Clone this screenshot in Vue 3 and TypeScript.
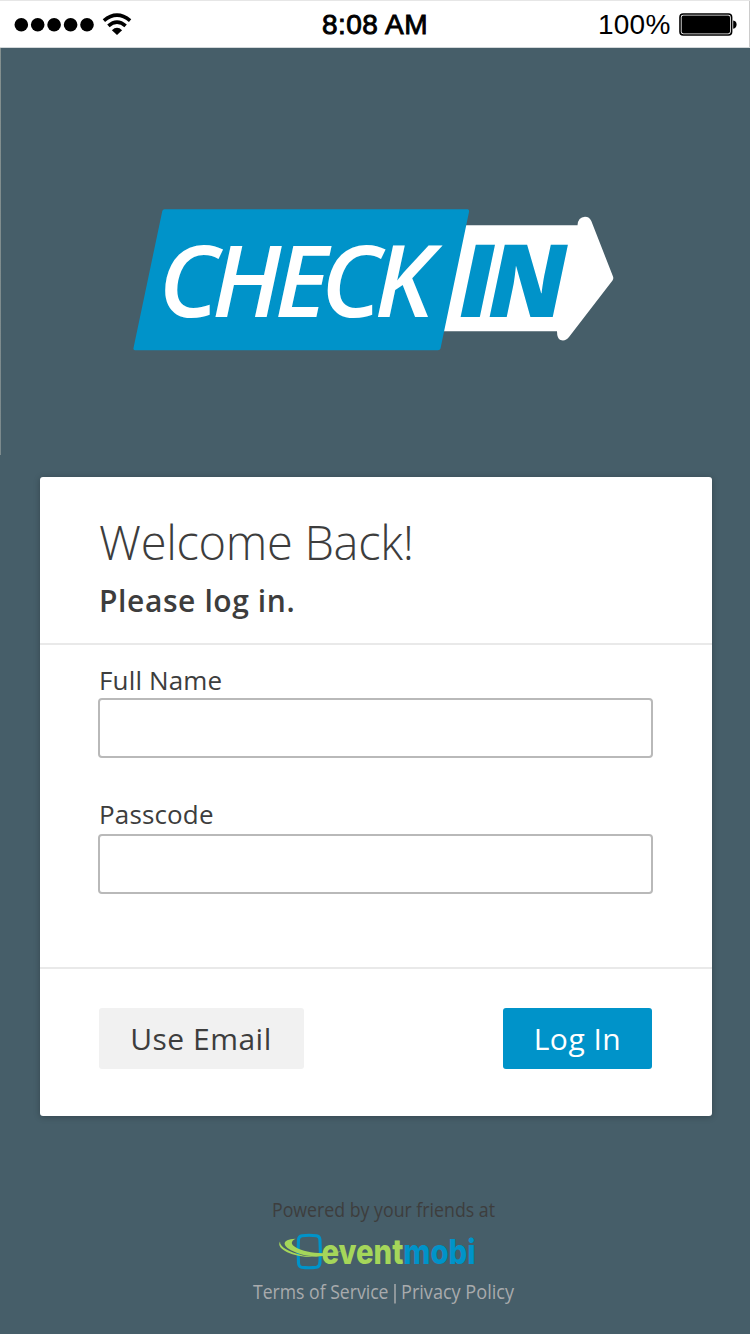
<script setup lang="ts">
import { ref } from 'vue'

const fullName = ref<string>('')
const passcode = ref<string>('')
const signalDots: number[] = [21.3, 37.7, 54.1, 70.6, 87]
</script>

<template>
  <main class="screen">
    <header class="status">
      <svg class="signal" width="140" height="46" viewBox="0 1 140 46">
        <circle v-for="x in signalDots" :key="x" :cx="x" cy="24.8" r="6.8" />
        <g fill="none" stroke="#000" stroke-width="3.6">
          <path d="M103.9 20.6Q117 9.600 130.1 20.6" />
          <path d="M108.4 25.9Q117 18.4 125.6 25.9" />
        </g>
        <path d="M111.900 30.300Q117 25.4 122.100 30.300L117 35Z" />
      </svg>
      <span class="time">8:08 AM</span>
      <div class="power">
        <span class="percent">100%</span>
        <svg width="60" height="24" viewBox="0 0 60 24">
          <rect x="1" y="1" width="51.6" height="21" rx="3.2" fill="#fff" stroke="#000" stroke-width="1.6" />
          <rect x="2.600" y="2.600" width="48.400" height="17.800" rx="1.8" />
          <path d="M54.2 7.4Q57.6 8 57.6 11.6T54.2 15.8Z" />
        </svg>
      </div>
    </header>

    <div class="brand">
      <svg width="482" height="143" viewBox="133 208 482 143">
        <path d="M450 225.300H577.5Q578 217 585 216.700Q589.5 216.700 591.3 221L613 276.500Q613.8 278.500 612.500 280.500L569 337Q565.500 341.500 560.500 340Q557 338.500 557 331.200H440Z" fill="#fff" />
        <path d="M164.500 209.200H467.500Q469.500 209.500 469 212L440.500 348.500Q440 350.300 438 350.300H135Q133 350.300 133.500 348L162.300 211Q162.800 209.200 164.500 209.200Z" fill="#0093c9" />
        <text class="check" x="158.500" y="317" textLength="275" lengthAdjust="spacing">CHECK</text>
        <text class="in" x="459" y="317" textLength="108.500" lengthAdjust="spacing">IN</text>
      </svg>
    </div>

    <form class="card" @submit.prevent>
      <div class="intro">
        <h1>Welcome Back!</h1>
        <p>Please log in.</p>
      </div>
      <div class="fields">
        <label for="name">Full Name</label>
        <input id="name" v-model="fullName" type="text">
        <label for="code" class="second">Passcode</label>
        <input id="code" v-model="passcode" type="password">
      </div>
      <div class="actions">
        <button type="button" class="alt">Use Email</button>
        <button type="submit" class="login">Log In</button>
      </div>
    </form>

    <footer class="foot">
      <svg width="400" height="130" viewBox="178 1186 400 130">
        <text class="powered" x="272" y="1217" textLength="223" lengthAdjust="spacingAndGlyphs">Powered by your friends at</text>
        <path d="M302 1235.800Q309 1234.800 316.500 1235.800Q319.500 1236.300 319.900 1239.500Q320.800 1251 319.900 1263Q319.500 1266.700 316.500 1267.200Q309 1268.200 301.500 1267.200Q298.700 1266.700 298.500 1263Q297.700 1251 298.500 1239.500Q298.700 1236.300 302 1235.800Z" fill="none" stroke="#0093c9" stroke-width="3.100" />
        <text class="mark" x="321.500" y="1263.700" textLength="154" lengthAdjust="spacingAndGlyphs"><tspan class="event">event</tspan><tspan class="mobi">mobi</tspan></text>
        <path d="M295.500 1238.800C290.500 1241.500 290.500 1244.500 296 1247.500C305 1252.300 322 1255.500 342 1251C326 1258 309 1257.800 296 1252.500C281 1246.500 281 1239.500 295.500 1238.800Z" fill="#a5d65a" />
        <path d="M280 1241.500C279.500 1246.500 288 1252 303 1255.500C308 1256.500 314 1256.800 320 1256.500C300 1259.500 274.500 1250.500 280 1241.500Z" fill="#a5d65a" />
        <text class="terms" x="253" y="1299" textLength="135.500" lengthAdjust="spacingAndGlyphs">Terms of Service</text>
        <path d="M395 1284V1303.500" stroke="#a9abad" stroke-width="1.500" />
        <text class="terms" x="401" y="1299" textLength="113" lengthAdjust="spacingAndGlyphs">Privacy Policy</text>
      </svg>
    </footer>
  </main>
</template>

<style>
body {
  margin: 0;
}
</style>

<style scoped>
.screen {
  width: 750px;
  height: 1334px;
  box-sizing: border-box;
  overflow: hidden;
  display: flex;
  flex-direction: column;
  background: linear-gradient(#84908f, #7c8a8d) 0 48px / 1px 407px no-repeat, #465e69;
  font-family: "Open Sans", "Noto Sans", sans-serif;
  color: #3d3d3d;
}

.status {
  height: 48px;
  box-sizing: border-box;
  flex: none;
  border-top: 1px solid #e6e6e6;
  border-bottom: 1px solid #d3d8da;
  background: linear-gradient(#ccc, #ccc) right / 1px 100% no-repeat, #fff;
  color: #000;
  display: grid;
  grid-template-columns: 1fr auto 1fr;
  font-family: "Liberation Sans", Arial, sans-serif;
  line-height: 48px;
}

.time {
  font-size: 28px;
  font-weight: 400;
  letter-spacing: 0.45px;
  -webkit-text-stroke: 0.9px #000;
}

.power {
  height: 48px;
  display: flex;
  justify-content: flex-end;
  align-items: center;
  gap: 8px;
  padding-right: 11.5px;
}

.percent {
  font-size: 28px;
  letter-spacing: 0.2px;
}

.brand {
  flex: none;
  height: 429px;
  box-sizing: border-box;
  padding: 160px 0 0 133px;
}

.check {
  font: italic 600 100.5px "Open Sans", sans-serif;
  fill: #fff;
}

.in {
  font: italic 800 100.5px "Open Sans", sans-serif;
  fill: #0093c9;
}

.card {
  flex: none;
  width: 672px;
  height: 639px;
  margin-left: 40px;
  border-radius: 3px;
  background: #fff;
  box-shadow: 0 1px 6px rgba(0, 0, 0, 0.25);
}

.intro {
  height: 168px;
  box-sizing: border-box;
  padding: 35px 60px 0 59px;
  border-bottom: 2px solid #e9e9e9;
}

h1 {
  margin: 0;
  font-size: 47px;
  font-weight: 300;
  line-height: 60px;
  letter-spacing: -0.3px;
  white-space: nowrap;
}

.intro p {
  margin: 9px 0 0;
  font-size: 30px;
  font-weight: 600;
  line-height: 40px;
  letter-spacing: 0.6px;
}

.fields {
  height: 324px;
  box-sizing: border-box;
  padding: 18px 59px 0 58px;
  border-bottom: 2px solid #e9e9e9;
  display: flex;
  flex-direction: column;
}

label {
  height: 35px;
  padding-left: 1px;
  font-size: 26px;
  line-height: 34px;
  letter-spacing: 0.15px;
}

.second {
  height: 37px;
  margin-top: 39px;
}

input {
  height: 60px;
  box-sizing: border-box;
  border: 2px solid #b9b9b9;
  border-radius: 4px;
  background: #fff;
  outline: none;
  padding: 0 14px;
  font: inherit;
}

.actions {
  display: flex;
  justify-content: space-between;
  padding: 39px 60px 0 59px;
}

button {
  height: 61px;
  border: 0;
  border-radius: 3px;
  padding: 0;
  font-family: inherit;
  font-size: 30px;
  line-height: 61px;
  letter-spacing: 0.5px;
}

.alt {
  width: 205px;
  padding-right: 1px;
  background: #f1f1f1;
  color: #3d3d3d;
}

.login {
  width: 149px;
  background: #0093c9;
  color: #fff;
}

.foot {
  padding: 70px 0 0 178px;
}

.powered,
.terms {
  font: 400 19.5px "Open Sans", sans-serif;
  fill: #3d3d3d;
}

.terms {
  fill: #a9abad;
}

.mark {
  font: 800 34px Inter, sans-serif;
}

.event {
  fill: #a5d65a;
}

.mobi {
  fill: #0093c9;
}
</style>
